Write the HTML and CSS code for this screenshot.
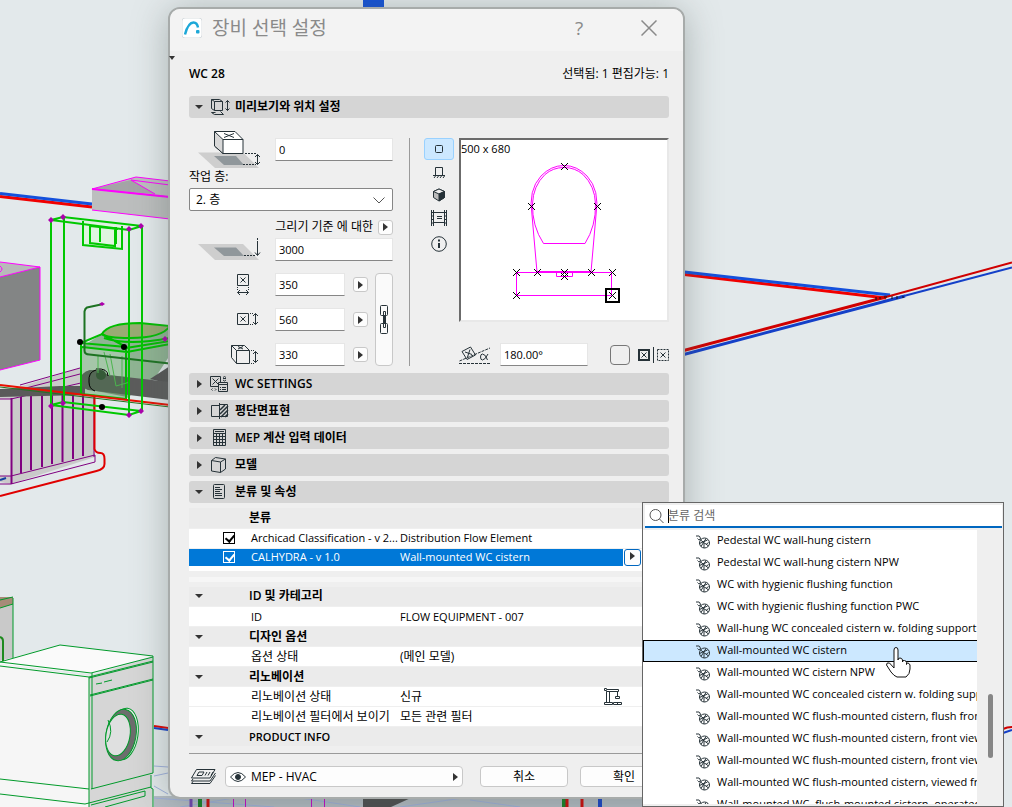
FILE: index.html
```html
<!DOCTYPE html>
<html lang="ko">
<head>
  <meta charset="utf-8">
  <title>장비 선택 설정</title>
  <link rel="stylesheet" href="styles.css">
</head>
<body>
  <svg class="scene" viewBox="0 0 1012 807" preserveAspectRatio="xMinYMin slice" aria-hidden="true">
    <!-- pipes -->
    <g fill="none" stroke-width="3">
      <path d="M0 196.500L92 207" stroke="#f00000"/>
      <path d="M0 193.500L92 204" stroke="#1450dc"/>
      <path d="M680 274L886 298" stroke="#f00000"/>
      <path d="M680 271.500L890 295" stroke="#1450dc"/>
      <path d="M680 351.500L886 297" stroke="#d00000"/>
      <path d="M680 355.500L905 296" stroke="#1440c8"/>
      <path d="M886 297L1012 262.500" stroke="#d00000" stroke-width="2"/>
      <path d="M900 297L1012 267.500" stroke="#1440c8" stroke-width="2"/>
      <path d="M876 297v3m4-3v2m4-2h3m5-1v3m5-3v3m6-3v2" stroke="#111" stroke-width="1"/>
      <path d="M1003 729q4-2 9-2" stroke="#d00000" stroke-width="2"/>
      <path d="M1003 733l9-3" stroke="#1440c8" stroke-width="2"/>
    </g>
    <rect x="363" y="0" width="21" height="10" fill="#1250d8"/>
    <!-- duct units -->
    <path d="M92 189L136 177L170 181V219L92 210z" fill="#bcbebe"/>
    <path d="M92 189L131 180L155 194z" fill="#a4a4a6"/>
    <path d="M92 210L170 219M92 189l44-12 34 4M92 189l78 8M131 180l39 5M131 180l24 14" fill="none" stroke="#ff00ff"/>
    <path d="M92 189l78 8" stroke="#ff00ff" stroke-width="2"/>
    <path d="M0 262L40 267L0 277z" fill="#b8b9ba"/>
    <path d="M0 277L40 267V360L0 370z" fill="#838585"/>
    <path d="M0 262l40 5v93L0 370M40 267L0 277M0 266q4 3 0 6" fill="none" stroke="#ff00ff"/>
    <!-- radiator -->
    <path d="M0 393L80 368L95 388V457L11 484L0 482z" fill="#cacaca"/>
    <path d="M0 399h11v77H0z" fill="#e2e2e2"/>
    <g fill="none" stroke="#800080">
      <path d="M20 385L80 368M26 388L80 374M0 399h11L94 380M0 476h11L95 455V462L11 484H0M94 392v65"/>
      <path d="M11.500 398v86M21 397v76M31 395v75M42 393v74M52 391v73M62.500 389v73M73 392v67M83 392v64" stroke-width="2"/>
    </g>
    <path d="M94.500 394v55q1 4 6 4 4 0 4 6v5q0 5-8 7L0 496" fill="none" stroke="#e00000" stroke-width="2"/>
    <path d="M0 480l6-2" stroke="#1440a0" stroke-width="2"/>
    <!-- selected WC -->
    <path d="M81 347L102 334Q108 323 140 323L170 326V355L155 378L127 398L81 393z" fill="#8fb493"/>
    <path d="M81 347l45 5v47l-45-6z" fill="#a5c6a9"/>
    <path d="M102 334Q108 323 140 323L170 326Q162 338 130 338 106 338 102 334z" fill="#99ab73" stroke="#00be00" stroke-width="2"/>
    <path d="M0 389L60 386 85 386V395L0 397z" fill="#5a5a5a"/>
    <path d="M150 379L170 366V384z" fill="#555"/>
    <path d="M90 370Q80 373 80 381 80 387 88 390L170 400V382L108 375 100 370z" fill="#5c5c5c"/>
    <path d="M90 370Q80 373 80 381 80 386 86 389L127 397V377L108 375 100 370z" fill="#4e7050" fill-opacity=".6"/>
    <path d="M96 370q-8 2-7 12 0 7 6 9M96 369q12-1 12 7" fill="none" stroke="#000"/>
    <circle cx="101" cy="375" r="5" fill="#355a37"/>
    <g fill="none" stroke="#00be00" stroke-width="2">
      <path d="M81 343v51l45 5v-52zM81 343l21-9 26 14M126 348l44-7M104 338q24 8 66 0M82 347l45 5 43-8"/>
      <path d="M98 355v18M104 352l6 24M110 354l6 32 14-4M122 356v32" stroke="#4bb54e" stroke-width="1"/>
    </g>
    <path d="M0 385L170 405" stroke="#e81000" stroke-width="2"/>
    <path d="M0 387L170 407" stroke="#267320" stroke-width="1"/>
    <path d="M101 304.500l-14 3q-2 1-2.500 4v39q0 4 5 4l80 9" fill="none" stroke="#1d7322" stroke-width="2"/>
    <path d="M83 221l38 5v22l-38-4z" fill="#def5df"/>
    <g fill="none" stroke="#00c800" stroke-width="2">
      <path d="M51 221v184M64 217v185M129 230v184M142 226v185"/>
      <path d="M51 220l12-3 79 9-13 4zM51 405l12-3 78 9-12 4z"/>
      <path d="M83 221v24l39 4v-23M90 226v17l25 3v-19M100 226v16M116 227v17M90 226l28 3"/>
    </g>
    <g fill="#ac00ac">
      <path d="M51 217l3 3-3 3-3-3zM63 214l3 3-3 3-3-3zM141 223l3 3-3 3-3-3zM129 226l3 3-3 3-3-3zM51 403l3 3-3 3-3-3zM63 400l3 3-3 3-3-3zM141 408l3 3-3 3-3-3zM129 412l3 3-3 3-3-3zM165 336l3 3-3 3-3-3zM102 302l3 2-3 2-3-2z"/>
    </g>
    <g fill="#000"><circle cx="80" cy="342" r="3"/><circle cx="124" cy="347" r="3"/><circle cx="102" cy="407" r="3"/></g>
    <!-- washing machine -->
    <path d="M0 598l13 6v54L0 661z" fill="#c9c9c9"/>
    <path d="M0 597l13 0v7L0 608z" fill="#a78b78"/>
    <path d="M0 661L60 645L153 656L91 674L0 664z" fill="#fafafa"/>
    <path d="M0 664L89 676V807H0z" fill="#f6f6f6"/>
    <path d="M89 676L153 657V773L151 775V789L153 790V807H89z" fill="#d6d6d6"/>
    <g fill="none" stroke="#009a2a">
      <path d="M13 598v60M0 600l13-3M0 608l13-4M0 662l14-4 46-13 93 11v117L91 789M0 662l91 11M0 666l89 11v130M92 673v116M91 673l62-16M89 677l64-16M90 695l63-16M0 794l85 10 66-17M91 805l54-14v5l-40 11"/>
      <path d="M89 678l64-16M90 696l63-16M96 684l6-1m2-1l8-2"/>
      <path d="M0 779l89 10M151 775v13l2 1v18"/>
    </g>
    <path d="M3 661v-20q0-3-3-4" fill="none" stroke="#1e8a1e" stroke-width="2"/>
    <ellipse cx="124" cy="734" rx="14" ry="26" transform="rotate(8 124 734)" fill="#eee" stroke="#009a2a"/>
    <ellipse cx="121" cy="735" rx="15" ry="26" transform="rotate(10 121 735)" fill="#6d6d6d" stroke="#009a2a"/>
    <ellipse cx="118" cy="735" rx="12" ry="21" transform="rotate(10 118 735)" fill="#dfe0e0" stroke="#009a2a"/>
    <path d="M108 720q6 12-1 22" fill="none" stroke="#009a2a"/>
    <path d="M154 726l14 2" stroke="#e00000" stroke-width="2"/>
    <path d="M154 728l14 2" stroke="#1440c8" stroke-width="2"/>
    <!-- floor grid below the dialog -->
    <path d="M154 796H642V807H154z" fill="#b4bcc4"/>
    <path d="M154 766l14 1M154 776l14-3M154 786l14 8M154 798l120 9M180 807l60-10M300 798l60 9M400 807l70-10M470 800l50 7" stroke="#9fb0dc" fill="none"/>
    <path d="M363 797h50l-22 10h-28z" fill="#4a4a4c"/>
    <path d="M191 797v10" stroke="#7040b0" stroke-width="3"/>
    <path d="M200 797v10M564 797v10" stroke="#108020" stroke-width="4"/>
    <path d="M208 797v10M567 797v10M582 797v10" stroke="#d00000" stroke-width="3"/>
    <path d="M600 797v10" stroke="#1440c8" stroke-width="4"/>
    <path d="M233.500 797v10M245.500 797v10M311.500 797v10M324.500 797v10" stroke="#c800c8"/>
  </svg>

  <main class="dialog">
    <header class="titlebar">
      <svg class="app-icon" width="20" height="20" viewBox="0 0 20 20"><rect width="20" height="20" rx="3" fill="#fff" stroke="#d8dde0"/><path d="M3 16.500C5 9 8 4.500 11.500 4.500c3 0 4 2 4.500 5" fill="none" stroke="#1ea8d8" stroke-width="2.500"/><rect x="14" y="12" width="3.500" height="3.500" rx="1" fill="#1ea8d8"/></svg>
      <h1>장비 선택 설정</h1>
      <button class="title-button" aria-label="도움말">?</button>
      <button class="title-button" aria-label="닫기"><svg width="16" height="16" viewBox="0 0 16 16"><path d="M.5.5l15 15M15.500.5l-15 15" stroke="#8a8a8a" stroke-width="1.500"/></svg></button>
    </header>

    <div class="content">
      <div class="info-row">
        <strong>WC 28</strong>
        <span>선택됨: 1 편집가능: 1</span>
      </div>

      <button class="panel-header">
        <i class="arrow down"></i>
        <svg class="icon" width="20" height="18" viewBox="0 0 20 18"><path d="M1.500 1.500v9l3 2M1.500 1.500h8l3 2M1.500 1.500l3 2v9h8v-9h-8M10.500 13.500l3 3h-9l-3-2h4M17.500 2.500v10M15.500 4.500l2-2 2 2M15.500 10.500l2 2 2-2"/></svg>
        미리보기와 위치 설정
      </button>

      <section class="preview-panel">
        <div class="position">
          <div class="field-row tall">
            <svg class="icon wide" width="62" height="39" viewBox="0 0 62 39"><path d="M0 22.500h45l16 15.500H17z" fill="#cecece" stroke="none"/><path d="M16 26h22l8 9H26z" fill="#90979b" stroke="none"/><path d="M16.500 1.500h20.500l8 8v14h-20l-8.500-7.500z" fill="#fff"/><path d="M16.500 1.500l8.500 8v14l-8.500-7.500z" fill="#d8d8d8"/><path d="M25 9.500h20M26 3.500l10 4M36 3.500l-10 4"/><path d="M47 23.500h11M45 34.500h13" stroke-dasharray="2 1"/><path d="M59.500 24.500v10M57 27l2.500-2.500 2.500 2.500M57 32l2.500 2.500 2.500-2.500"/></svg>
            <input class="field latin" aria-label="층까지의 높이" value="0">
          </div>
          <label class="story-label" for="story">작업 층:</label>
          <div class="select-box">
            <select id="story"><option>2. 층</option></select>
            <svg class="chevron" width="12" height="7" viewBox="0 0 12 7"><path d="M.5.5L6 6l5.500-5.500" fill="none" stroke="#555"/></svg>
          </div>
          <div class="reference">
            <label for="height">그리기 기준 에 대한</label>
            <button class="flyout" aria-label="기준 선택"><i class="arrow right"></i></button>
          </div>
          <div class="field-row">
            <svg class="icon wide" width="62" height="23" viewBox="0 0 62 23"><path d="M0 6h45l16 16H17z" fill="#cecece" stroke="none"/><path d="M16 9.500h22l8 8.500H26z" fill="#90979b" stroke="none"/><path d="M46 17.500h12M59.500 0v5" stroke-dasharray="2 1"/><path d="M59.500 5v12M57 14.500l2.500 3 2.500-3"/></svg>
            <input class="field latin" id="height" value="3000">
          </div>
          <div class="sizes">
            <div class="size-list">
              <div class="size-row">
                <svg class="icon" width="15" height="22" viewBox="0 0 15 22"><path d="M1.500.5h11v11h-11zM4.500 3.500l5 5M9.500 3.500l-5 5M1.500 18.500h11M4 16l-2.500 2.500 2.500 2.500M10 16l2.500 2.500-2.500 2.500"/><path d="M1.500 13v4M12.500 13v4" stroke-dasharray="1 1"/></svg>
                <input class="field latin" aria-label="너비" value="350">
                <button class="flyout" aria-label="너비 옵션"><i class="arrow right"></i></button>
              </div>
              <div class="size-row">
                <svg class="icon" width="22" height="15" viewBox="0 0 22 15"><path d="M.5 1.500h11v11H.5zM3.500 4.500l5 5M8.500 4.500l-5 5M18.500 1.500v11M16 4l2.500-2.500L21 4M16 10l2.500 2.500L21 10"/><path d="M13 1.500h4M13 12.500h4" stroke-dasharray="1 1"/></svg>
                <input class="field latin" aria-label="깊이" value="560">
                <button class="flyout" aria-label="깊이 옵션"><i class="arrow right"></i></button>
              </div>
              <div class="size-row">
                <svg class="icon" width="28" height="19" viewBox="0 0 28 19"><path d="M.5.5h13l5 5v13h-13l-5-6zM.5.5l5 5h13M5.500 5.500v13M7 1.500l5 2.500M12 1.500L7 4M24.500 6.500v11M22 9l2.500-2.500L27 9M22 15l2.500 2.500L27 15"/><path d="M20 5.500h4M20 18.500h4" stroke-dasharray="1 1"/></svg>
                <input class="field latin" aria-label="높이" value="330">
                <button class="flyout" aria-label="높이 옵션"><i class="arrow right"></i></button>
              </div>
            </div>
            <button class="chain" aria-label="비율 유지"><svg class="icon" width="9" height="29" viewBox="0 0 9 29"><path d="M3 10.500H1.500q-1 0-1-1v-8q0-1 1-1h5q1 0 1 1v8q0 1-1 1H6M3 18.500H1.500q-1 0-1 1v8q0 1 1 1h5q1 0 1-1v-8q0-1-1-1H6M3.500 6.500h2v16h-2zM4.500 10v9"/></svg></button>
          </div>
        </div>

        <div class="tools">
          <button class="tool active" aria-label="평면"><svg class="icon" width="16" height="16" viewBox="0 0 16 16"><rect x="4.500" y="4.500" width="7" height="7" rx="1"/></svg></button>
          <button class="tool" aria-label="입면"><svg class="icon" width="16" height="16" viewBox="0 0 16 16"><path d="M4.500 11V3.500h7V11M2 11.500h12M3 14l1.500-2M6 14l1.500-2M9 14l1.500-2M12 14l1.500-2"/></svg></button>
          <button class="tool" aria-label="3D"><svg class="icon" width="16" height="16" viewBox="0 0 16 16"><path d="M2.500 4.500L8 2l5.500 2.500v6L8 14l-5.500-3.500z" fill="#bbb"/><path d="M2.500 4.500L8 2l5.500 2.500L8 7z" fill="#eee"/><path d="M8 7l5.500-2.500v6L8 14z" fill="#263238"/></svg></button>
          <button class="tool" aria-label="미리보기 그림"><svg class="icon" width="16" height="16" viewBox="0 0 16 16"><path d="M.5 0v16M2.500 0v16M13.500 0v16M15.500 0v16M2.500 2.500h11M2.500 12.500h11M6 6.500h5M6 8.500h5M.5 2.500h2M.5 6h2M.5 9.500h2M.5 13h2M13.500 2.500h2M13.500 6h2M13.500 9.500h2M13.500 13h2"/></svg></button>
          <button class="tool info" aria-label="정보"><svg class="icon" width="16" height="16" viewBox="0 0 16 16"><circle cx="8" cy="8" r="7.300"/><path d="M8 7v5" stroke-width="2"/><path d="M8 3.500v2" stroke-width="2"/></svg></button>
        </div>

        <div class="view">
          <div class="canvas">
            <span class="latin">500 x 680</span>
            <svg class="symbol" width="206" height="164" viewBox="461 156 206 164">
              <g fill="none" stroke="#ff00ff">
                <path d="M532 215Q528 190 541 176 551 165.500 564 165.500 577 165.500 587 176 600 190 596 215L591 272M532 215L537 272"/>
                <path d="M543.500 243.500Q532 226 532.500 204 533 186 545 174.500 553 167.500 564 167.500 575 167.500 583 174.500 595 186 595.500 204 596 226 585 243.500z"/>
                <path d="M516.500 272.500h95v23h-95zM556.500 273v3.500h16v-3.500"/>
                <path d="M537 272h53" stroke-width="2"/>
              </g>
              <path d="M561 163l7 7m0-7l-7 7M528 203l7 7m0-7l-7 7M594 203l7 7m0-7l-7 7M513 269l7 7m0-7l-7 7M534 269l7 7m0-7l-7 7M561 269l7 7m0-7l-7 7M561 273l7 7m0-7l-7 7M588 269l7 7m0-7l-7 7M609 269l7 7m0-7l-7 7M513 292l7 7m0-7l-7 7M609 292l7 7m0-7l-7 7" stroke="#000" fill="none"/>
              <rect x="606" y="289" width="13" height="13" fill="none" stroke="#000" stroke-width="2"/>
            </svg>
          </div>
          <div class="rotation">
            <svg class="icon" width="31" height="20" viewBox="0 0 31 20"><path d="M3 6.500L11.500 2l5 8L8 14.500zM6 7l7 2.500M11 4.500l-2.500 7.500"/><path d="M.5 16L31 3M0 18.500h31" stroke-dasharray="3 1"/><path d="M29 9q-3 6-5.500 6-2 0-2-3t2-3q3 0 5 6"/></svg>
            <input class="field angle latin" aria-label="회전 각도" value="180.00°">
            <input type="checkbox" class="mirror" id="mirror">
            <label for="mirror" aria-label="대칭"><svg class="icon" width="31" height="16" viewBox="0 0 31 16"><path d="M1 3h10v10H1z" stroke-width="2"/><path d="M3.500 5.500l5 5m0-5l-5 5M15.500 0v16M22.500 5.500l5 5m0-5l-5 5"/><path d="M19.500 2.500h11v11h-11z" stroke-dasharray="2 1"/></svg></label>
          </div>
        </div>
      </section>

      <div class="panels">
        <button class="panel-header"><i class="arrow right"></i><svg class="icon" width="20" height="18" viewBox="0 0 20 18"><path d="M.5 1.500h10v10H.5zM2.500 3.500l6 6m0-6l-6 6"/><path d="M8.500 7.500h9v9h-9z" fill="#d5d5d5"/><path d="M8.500 9.500h9M10 12.500h1m1 0h4M10 14.500h1m1 0h4M13 3.500h3M13 5l1.500 1L16 5M13 2.500l1.500-1 1.500 1M2.500 13.500l-1 1 1 1M5 13.500l1 1-1 1"/></svg>WC SETTINGS</button>
        <button class="panel-header"><i class="arrow right"></i><svg class="icon" width="20" height="18" viewBox="0 0 20 18"><path d="M9 3.500H1.500v11H9M9.500 1v16M9.500 2.500h8v12h-8z"/><path d="M10 8l5-5M10 12l8-8M11 15l7-7M15 15l3-3" stroke-width="1.500"/></svg>평단면표현</button>
        <button class="panel-header"><i class="arrow right"></i><svg class="icon" width="20" height="18" viewBox="0 0 20 18"><path d="M3.500.5h12v16h-12zM3.500 4.500h12M3.500 7.500h12M3.500 10.500h12M3.500 13.500h12M6.500 5v11M9.500 5v11M12.500 5v11M5 2.500h9"/></svg>MEP 계산 입력 데이터</button>
        <button class="panel-header"><i class="arrow right"></i><svg class="icon" width="20" height="18" viewBox="0 0 20 18"><path d="M1.500 4.500l9 1.500v10.500l-9-1.500zM1.500 4.500l4-3 10 1.500v10l-5 3.500M10.500 6l5-3"/></svg>모델</button>
        <button class="panel-header"><i class="arrow down"></i><svg class="icon" width="20" height="18" viewBox="0 0 20 18"><rect x="3.500" y="1.500" width="11" height="14" rx="1"/><path d="M5 4.500h5M5 6.500h7M5 8.500h5M5 10.500h7M5 12.500h7"/></svg>분류 및 속성</button>
      </div>

      <table class="props classes">
        <colgroup><col class="c-mark"><col class="c-name"><col><col class="c-action"></colgroup>
        <tr class="group"><td></td><th colspan="3">분류</th></tr>
        <tr class="latin">
          <td class="mark"><input type="checkbox" class="tick" aria-label="Archicad Classification" checked></td>
          <td>Archicad Classification - v 2...</td><td>Distribution Flow Element</td><td></td>
        </tr>
        <tr class="latin selected">
          <td class="mark"><input type="checkbox" class="tick" aria-label="CALHYDRA" checked></td>
          <td>CALHYDRA - v 1.0</td><td>Wall-mounted WC cistern</td>
          <td class="action"><button class="flyout focus" aria-label="분류 선택"><i class="arrow right"></i></button></td>
        </tr>
      </table>
      <div class="splitter"></div>
      <table class="props">
        <colgroup><col class="c-mark"><col class="c-name"><col><col class="c-action"></colgroup>
        <tr class="group"><td><i class="arrow down"></i></td><th colspan="3">ID 및 카테고리</th></tr>
        <tr class="latin"><td></td><td>ID</td><td>FLOW EQUIPMENT - 007</td><td></td></tr>
        <tr class="group"><td><i class="arrow down"></i></td><th colspan="3">디자인 옵션</th></tr>
        <tr><td></td><td>옵션 상태</td><td>(메인 모델)</td><td></td></tr>
        <tr class="group"><td><i class="arrow down"></i></td><th colspan="3">리노베이션</th></tr>
        <tr>
          <td></td><td>리노베이션 상태</td>
          <td><div class="with-icon">신규<svg class="icon" width="19" height="18" viewBox="0 0 19 18"><path d="M.5.5h2v1h12v2h-12v-1h-2zM2.500 3.500v11M5.500 3.500v11M.5 14.500h8v2h-8zM13.500 3.500v5M11.500 8.500h4v2h-4zM9.500 14.500h8v2h-8zM13.500 14.500v2"/></svg></div></td>
          <td></td>
        </tr>
        <tr><td></td><td>리노베이션 필터에서 보이기</td><td>모든 관련 필터</td><td></td></tr>
        <tr class="group"><td><i class="arrow down"></i></td><th colspan="3" class="latin">PRODUCT INFO</th></tr>
      </table>

      <footer class="actions">
        <svg class="icon" width="27" height="18" viewBox="0 0 27 18"><path d="M6.500 1.500h18.500l-5 8.500H1.500zM9 4h5l-2 3.500H7zM17 4l-2 3.500M20 4l-2 3.500M23 4l-2 3.500M3 11L1.500 13H20l5.500-8M3 13.500L1.500 15.500H20l5.500-8"/></svg>
        <button class="layer"><svg class="icon" width="16" height="10" viewBox="0 0 16 10"><path d="M.5 5Q8-4 15.500 5 8 14 .5 5z"/><circle cx="8" cy="5" r="2.500" fill="#263238"/></svg><span>MEP - HVAC</span><i class="arrow right"></i></button>
        <button class="push">취소</button>
        <button class="push">확인</button>
      </footer>
    </div>
  </main>

  <svg class="mini-arrow" width="6" height="4" viewBox="0 0 6 4" aria-hidden="true"><path d="M0 0h6L3 4z" fill="#333"/></svg>

  <svg width="0" height="0" class="defs" aria-hidden="true">
    <symbol id="class-icon" viewBox="0 0 14 14"><circle cx="8.500" cy="8" r="5"/><path d="M0 1h3q1 0 1.500 3M1.500 3.500q1 2 3 1M4.500 5l8 6M5 11.500l5-8M3.500 8.500l8-3.500M8 8v5M10 9.500l2.500-2"/></symbol>
  </svg>

  <div class="popup">
    <div class="search">
      <svg width="16" height="16" viewBox="0 0 16 16"><circle cx="6.500" cy="7" r="5.500" fill="none" stroke="#555"/><path d="M10.500 11l4 4" stroke="#555"/></svg>
      <i class="caret"></i>
      <input aria-label="분류 검색" placeholder="분류 검색">
    </div>
    <div class="results">
      <div class="list latin">
        <button class="item"><svg class="icon"><use href="#class-icon"/></svg>Pedestal WC wall-hung cistern</button>
        <button class="item"><svg class="icon"><use href="#class-icon"/></svg>Pedestal WC wall-hung cistern NPW</button>
        <button class="item"><svg class="icon"><use href="#class-icon"/></svg>WC with hygienic flushing function</button>
        <button class="item"><svg class="icon"><use href="#class-icon"/></svg>WC with hygienic flushing function PWC</button>
        <button class="item"><svg class="icon"><use href="#class-icon"/></svg>Wall-hung WC concealed cistern w. folding support</button>
        <button class="item current"><svg class="icon"><use href="#class-icon"/></svg>Wall-mounted WC cistern</button>
        <button class="item"><svg class="icon"><use href="#class-icon"/></svg>Wall-mounted WC cistern NPW</button>
        <button class="item"><svg class="icon"><use href="#class-icon"/></svg>Wall-mounted WC concealed cistern w. folding support</button>
        <button class="item"><svg class="icon"><use href="#class-icon"/></svg>Wall-mounted WC flush-mounted cistern, flush front</button>
        <button class="item"><svg class="icon"><use href="#class-icon"/></svg>Wall-mounted WC flush-mounted cistern, front view</button>
        <button class="item"><svg class="icon"><use href="#class-icon"/></svg>Wall-mounted WC flush-mounted cistern, front view</button>
        <button class="item"><svg class="icon"><use href="#class-icon"/></svg>Wall-mounted WC flush-mounted cistern, viewed from</button>
        <button class="item"><svg class="icon"><use href="#class-icon"/></svg>Wall-mounted WC, flush-mounted cistern, operated</button>
      </div>
      <div class="scrollbar"><i></i></div>
    </div>
  </div>

  <svg class="pointer" width="26" height="34" viewBox="0 0 26 34" aria-hidden="true"><path d="M9 22V4q0-2.500 2-2.500T13 4v10q0-2 2-2t2.500 2v2q0-2 2-1.500t2 2v2q0-2 1.500-1.500t2 2V23q0 5-4 8H12Q9 30 6 26L1.500 19q0-3 3-2z" fill="#fff" stroke="#111" transform="translate(-1 0)"/></svg>
</body>
</html>
```
FILE: styles.css
```css
* {
  box-sizing: border-box;
}

body {
  margin: 0;
  height: 100vh;
  overflow: hidden;
  position: relative;
  background-color: #e3e9eb;
  font-family: "Open Sans", "Noto Sans CJK KR", sans-serif;
  font-size: 12px;
  line-height: 14px;
  color: #000;
}

button, input, select {
  font: inherit;
  color: inherit;
  margin: 0;
}

button {
  padding: 0;
  border: none;
  background: none;
}

.latin {
  font-size: 11px;
}

.scene {
  display: block;
  width: 100%;
  height: 100%;
}

.icon {
  fill: none;
  stroke: #263238;
  flex: none;
}

.arrow {
  display: inline-block;
  flex: none;
  border: 4px solid transparent;
}

.arrow.down {
  border-top-color: #333;
  border-bottom-width: 0;
}

.arrow.right {
  border-left: 5px solid #333;
  border-right-width: 0;
}

/* dialog window */
.dialog {
  position: absolute;
  left: 168px;
  top: 7px;
  width: 51%;
  min-width: 517px;
  border: 2px solid #a7abaa;
  border-radius: 12px;
  background-color: #efefef;
  box-shadow: 0 4px 36px rgba(80, 95, 90, 0.4);
  overflow: hidden;
}

.titlebar {
  display: flex;
  align-items: center;
  height: 42px;
  padding: 0 24px 4px 12px;
  background-color: #f3f3f3;
  color: #8a8a8a;
}

h1 {
  flex: 1;
  margin: 0 0 0 10px;
  font-size: 19px;
  line-height: 24px;
  font-weight: normal;
}

.title-button {
  display: flex;
  align-items: center;
  justify-content: center;
  width: 20px;
  height: 24px;
  margin-left: 50px;
  font-size: 19px;
  line-height: 24px;
}

.content {
  padding: 0 14px 10px 19px;
}

.info-row {
  display: flex;
  align-items: center;
  justify-content: space-between;
  height: 45px;
}

.info-row strong {
  font-weight: 600;
}

.panel-header {
  display: flex;
  align-items: center;
  width: 100%;
  height: 22px;
  border-radius: 3px;
  background-color: #d5d5d5;
  font-weight: 600;
}

.panel-header .arrow {
  margin: 0 7px 0 6px;
}

.panel-header .arrow.right {
  margin: 0 8px;
}

.panel-header .icon {
  margin-right: 5px;
}

.panels {
  display: flex;
  flex-direction: column;
  gap: 5px;
}

/* preview and position */
.preview-panel {
  display: flex;
  padding: 11px 0 7px;
}

.position {
  width: 204px;
}

.field-row {
  display: flex;
  align-items: center;
  gap: 14px;
}

.field-row.tall {
  height: 41px;
}

.field-row .wide {
  margin-left: 8px;
  width: 64px;
}

.field {
  flex: 1;
  min-width: 0;
  height: 23px;
  padding: 0 3px;
  border: 1px solid #e6e6e6;
  border-bottom-color: #868686;
  background-color: #fff;
}

.story-label {
  display: block;
}

.select-box {
  position: relative;
  margin-top: 4px;
}

.select-box select {
  appearance: none;
  display: block;
  width: 100%;
  height: 23px;
  padding: 0 6px;
  border: 1px solid #868686;
  border-radius: 2px;
  background-color: #fff;
}

.chevron {
  position: absolute;
  right: 8px;
  top: 9px;
}

.reference {
  display: flex;
  justify-content: flex-end;
  align-items: center;
  gap: 5px;
  height: 16px;
  margin: 8px 0 3px;
}

.flyout {
  display: flex;
  align-items: center;
  justify-content: center;
  width: 15px;
  height: 15px;
  border: 1px solid #c8c8c8;
  border-radius: 3px;
  background-color: #fdfdfd;
}

.sizes {
  display: flex;
  gap: 7px;
  margin-top: 12px;
}

.size-list {
  flex: 1;
  display: flex;
  flex-direction: column;
  gap: 12px;
}

.size-row {
  display: grid;
  grid-template-columns: 78px 70px 15px;
  gap: 8px;
  align-items: center;
  height: 23px;
}

.size-row .icon {
  justify-self: end;
  margin-right: 8px;
}

.size-row:first-child .icon {
  margin-right: 16px;
}

.chain {
  display: flex;
  align-items: center;
  justify-content: center;
  width: 18px;
  border: 1px solid #c8c8c8;
  border-radius: 4px;
  background-color: #fafafa;
}

.tools {
  display: flex;
  flex-direction: column;
  gap: 1px;
  margin: 9px 5px 0 16px;
  padding-left: 14px;
  border-left: 1px solid #9a9a9a;
}

.tool {
  display: flex;
  align-items: center;
  justify-content: center;
  width: 30px;
  height: 22px;
}

.tool.active {
  border: 1px solid #99d1ff;
  border-radius: 3px;
  background-color: #cce8ff;
}

.tool.info {
  height: 28px;
}

.view {
  flex: 1;
  min-width: 0;
  margin-top: 9px;
}

.canvas {
  height: 184px;
  padding-top: 2px;
  border: 2px solid #e8e8e8;
  border-top-color: #6b6b6b;
  border-left-color: #6b6b6b;
  background-color: #fff;
}

.canvas span, .symbol {
  display: block;
  max-width: 100%;
}

.rotation {
  display: flex;
  align-items: center;
  gap: 10px;
  margin-top: 21px;
}

.field.angle {
  margin-right: 12px;
}

.mirror {
  appearance: none;
  flex: none;
  width: 20px;
  height: 20px;
  border: 1px solid #777;
  border-radius: 4px;
}

.rotation label {
  display: flex;
  margin-left: -2px;
}

/* property tables */
.props {
  width: 100%;
  table-layout: fixed;
  border-collapse: collapse;
  background-color: #fff;
}

.props.classes {
  margin-top: 5px;
  border-bottom: 5px solid #fff;
}

.c-mark {
  width: 60px;
}

.c-name {
  width: 151px;
}

.c-action {
  width: 46px;
}

.props td, .props th {
  height: 20px;
  padding: 0 0 0 2px;
  border-bottom: 1px solid #efefef;
  font-weight: normal;
  text-align: left;
  white-space: nowrap;
}

.props td:nth-child(3) {
  padding-left: 0;
}

.props .group {
  background-color: #ebebeb;
}

.props .group th {
  padding-left: 0;
  font-weight: 600;
}

.props .arrow {
  margin: 0 4px 2px;
}

.props .selected td {
  background-color: #0078d7;
  color: #fff;
}

.props .selected .action {
  padding-left: 1px;
  background-color: #fff;
  color: #000;
}

.props .mark {
  padding-left: 34px;
}

.tick {
  appearance: none;
  display: block;
  width: 12px;
  height: 12px;
  border: 1px solid currentColor;
  background: #fff;
  color: #000;
}

.tick:checked::before {
  content: "";
  display: block;
  width: 4px;
  height: 7px;
  margin: 0 3px;
  border: solid currentColor;
  border-width: 0 2px 2px 0;
  transform: rotate(40deg);
}

.selected .tick {
  background-color: #0078d7;
  color: #fff;
}

.flyout.focus {
  width: 17px;
  height: 17px;
  border-color: #0067c0;
}

.with-icon {
  display: flex;
  align-items: center;
  justify-content: space-between;
}

.splitter {
  height: 5px;
  margin: 6px 0 5px;
  background-color: #f6f6f6;
}

.actions {
  display: flex;
  align-items: center;
  gap: 12px;
  margin-top: 6px;
  padding: 12px 1px 0 0;
  border-top: 1px solid #9a9a9a;
}

.actions > .icon {
  margin: 0 -4px 0 1px;
}

.layer, .push {
  height: 21px;
  border: 1px solid #c8c8c8;
  border-radius: 4px;
  background-color: #fdfdfd;
}

.layer {
  display: flex;
  flex: 1;
  align-items: center;
  gap: 5px;
  margin-right: 5px;
  padding: 0 4px;
}

.layer span {
  flex: 1;
  text-align: left;
}

.push {
  width: 88px;
}

.mini-arrow {
  position: absolute;
  left: 169px;
  top: 56px;
}

.defs {
  position: absolute;
}

/* classification popup */
.popup {
  position: absolute;
  left: 642px;
  right: 8px;
  top: 502px;
  bottom: 0;
  display: flex;
  flex-direction: column;
  padding: 2px 1px 2px 0;
  border: 1px solid #666;
  background-color: #efefef;
}

.search {
  display: flex;
  align-items: center;
  gap: 3px;
  height: 23px;
  margin-left: 2px;
  padding-left: 4px;
  border-bottom: 2px solid #0067c0;
  background-color: #fff;
}

.search input {
  flex: 1;
  min-width: 0;
  padding: 0;
  margin-left: -4px;
  border: none;
  outline: none;
  background: none;
}

.search input::placeholder {
  color: #666;
}

.caret {
  width: 1px;
  height: 14px;
  background-color: #000;
}

.results {
  display: flex;
  flex: 1;
  min-height: 0;
  margin-top: 2px;
}

.list {
  flex: 1;
  min-width: 0;
  overflow: hidden;
  background-color: #fff;
}

.item {
  display: flex;
  align-items: center;
  gap: 7px;
  width: 100%;
  height: 22px;
  padding: 0 0 2px 52px;
  border: 1px solid transparent;
  border-right: none;
  white-space: nowrap;
}

.item .icon {
  width: 14px;
  height: 14px;
  margin-top: 4px;
}

.item.current {
  border-color: #000;
  background-color: #cce8ff;
}

.scrollbar {
  width: 25px;
  padding: 164px 0 0 11px;
}

.scrollbar i {
  display: block;
  width: 5px;
  height: 64px;
  border-radius: 3px;
  background-color: #868686;
}

.pointer {
  position: absolute;
  left: 886px;
  top: 646px;
}
```
